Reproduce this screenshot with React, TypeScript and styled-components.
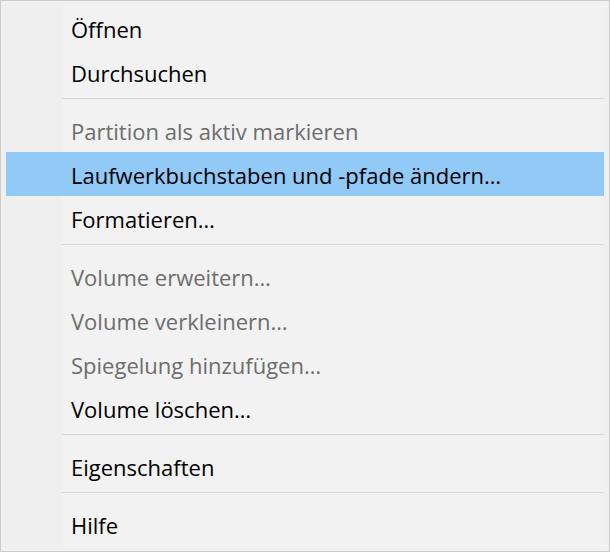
import React from 'react';
import styled, { createGlobalStyle } from 'styled-components';

const GlobalStyle = createGlobalStyle`
  html, body {
    margin: 0;
    padding: 0;
    background: #f0f0f0;
  }
`;

type Entry =
  | { kind: 'item'; label: string; disabled?: boolean; active?: boolean }
  | { kind: 'sep' };

const entries: Entry[] = [
  { kind: 'item', label: 'Öffnen' },
  { kind: 'item', label: 'Durchsuchen' },
  { kind: 'sep' },
  { kind: 'item', label: 'Partition als aktiv markieren', disabled: true },
  { kind: 'item', label: 'Laufwerkbuchstaben und -pfade ändern…', active: true },
  { kind: 'item', label: 'Formatieren…' },
  { kind: 'sep' },
  { kind: 'item', label: 'Volume erweitern…', disabled: true },
  { kind: 'item', label: 'Volume verkleinern…', disabled: true },
  { kind: 'item', label: 'Spiegelung hinzufügen…', disabled: true },
  { kind: 'item', label: 'Volume löschen…' },
  { kind: 'sep' },
  { kind: 'item', label: 'Eigenschaften' },
  { kind: 'sep' },
  { kind: 'item', label: 'Hilfe' },
];

const Menu = styled.div`
  box-sizing: border-box;
  width: 610px;
  height: 552px;
  padding: 5px;
  background: #f0f0f0;
  border: 1px solid #cccccc;
  font-family: "Open Sans", "Noto Sans", sans-serif;
`;

const List = styled.ul`
  list-style: none;
  margin: 0;
  padding: 0;
  background: #f2f2f2;
`;

const Row = styled.li<{ $active?: boolean }>`
  display: grid;
  grid-template-columns: 56px 1fr;
  height: 44px;
  background: ${p => (p.$active ? '#91c9f7' : 'transparent')};
`;

const Gutter = styled.div<{ $active?: boolean }>`
  background: ${p => (p.$active ? 'transparent' : '#efefef')};
`;

const Label = styled.span<{ $disabled?: boolean }>`
  display: flex;
  align-items: center;
  padding: 1px 0 0 9px;
  font-size: 22px;
  color: ${p => (p.$disabled ? '#6d6d6d' : '#000000')};
  white-space: nowrap;
`;

const SepRow = styled.li`
  display: grid;
  grid-template-columns: 56px 1fr;
  height: 14px;
`;

const Line = styled.div`
  margin-top: 4px;
  height: 1px;
  background: #d7d7d7;
`;

export default function App() {
  return (
    <>
      <GlobalStyle />
      <Menu>
        <List>
          {entries.map((e, i) =>
            e.kind === 'sep' ? (
              <SepRow key={i}>
                <Gutter />
                <Line />
              </SepRow>
            ) : (
              <Row key={i} $active={e.active}>
                <Gutter $active={e.active} />
                <Label $disabled={e.disabled}>{e.label}</Label>
              </Row>
            )
          )}
        </List>
      </Menu>
    </>
  );
}
